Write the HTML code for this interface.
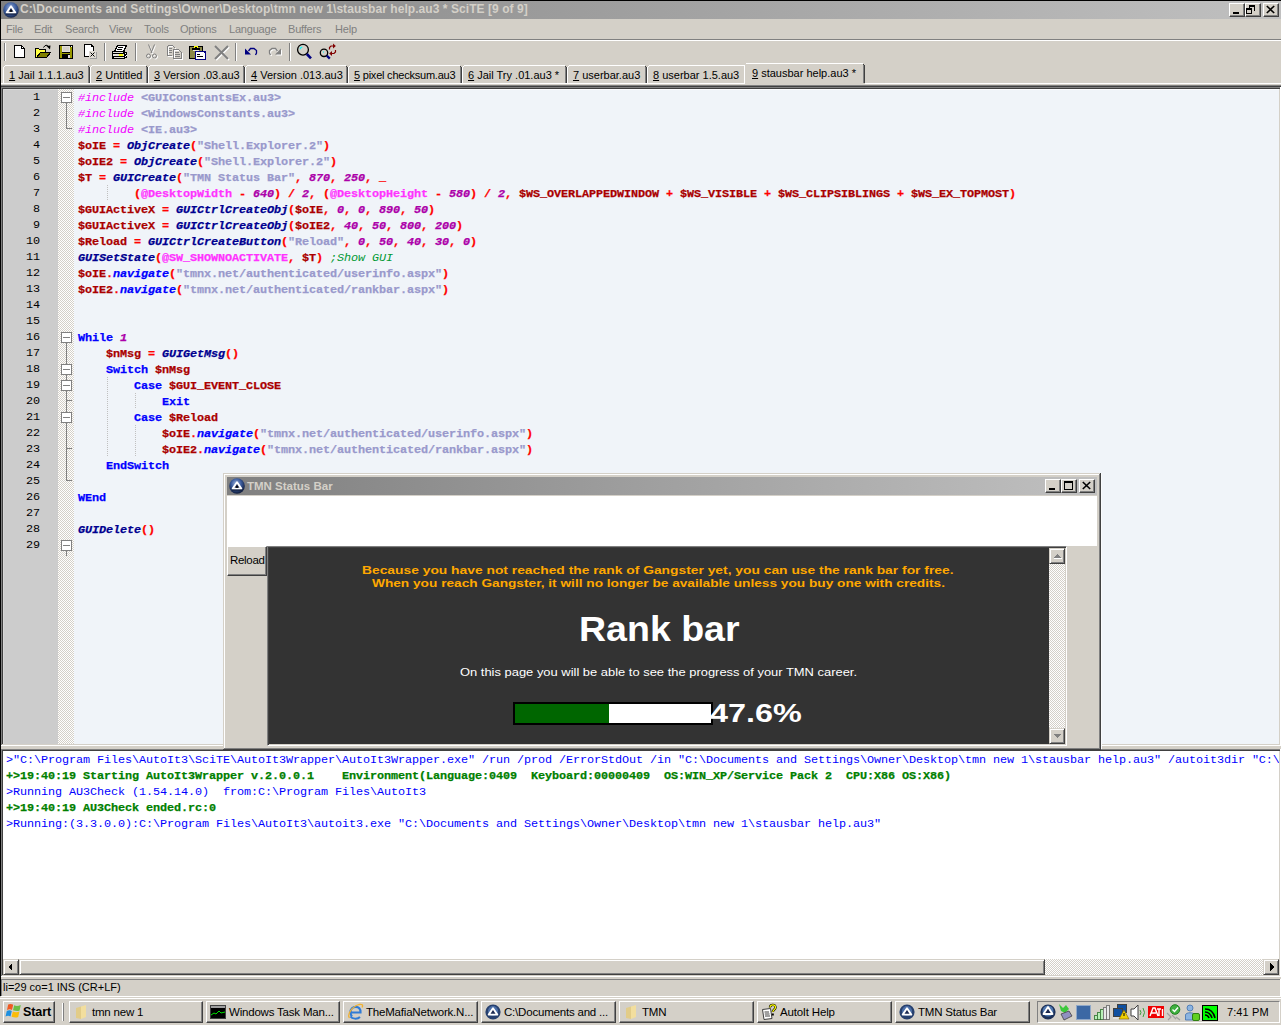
<!DOCTYPE html>
<html><head><meta charset="utf-8"><title>SciTE</title>
<style>
*{margin:0;padding:0;box-sizing:border-box}
html,body{width:1281px;height:1025px;overflow:hidden;background:#D4D0C8}
body{position:relative;font-family:"Liberation Sans",sans-serif;font-size:11px;color:#000}
.a{position:absolute}
.ui{font-family:"Liberation Sans",sans-serif;font-size:11px;white-space:pre;line-height:13px;letter-spacing:-0.2px}
.tabt{letter-spacing:0}
.tabt u{text-decoration:underline;text-underline-offset:1px}
/* title */
#title{left:1px;top:1px;width:1280px;height:18px;background:linear-gradient(to right,#808080,#C0C0C0)}
#ttext{left:20px;top:3px;color:#D4D0C8;font-weight:bold;font-size:12px;white-space:pre;line-height:13px;letter-spacing:0.06px}
.cbtn{position:absolute;width:16px;height:14px;background:#D4D0C8;border-top:1px solid #fff;border-left:1px solid #fff;border-right:1px solid #404040;border-bottom:1px solid #404040;box-shadow:inset -1px -1px 0 #808080}
.sbtn{position:absolute;width:16px;height:16px;background:#D4D0C8;border-top:1px solid #D4D0C8;border-left:1px solid #D4D0C8;border-right:1px solid #404040;border-bottom:1px solid #404040;box-shadow:inset 1px 1px 0 #fff,inset -1px -1px 0 #808080}
.iet{font-size:11px;line-height:13px;white-space:pre;transform-origin:0 0}
.tbtn{position:absolute;top:1001px;height:22px;background:#D4D0C8;border-top:1px solid #fff;border-left:1px solid #fff;border-right:1px solid #404040;border-bottom:1px solid #404040;box-shadow:inset -1px -1px 0 #808080}
/* menu */
.menu{top:23px;color:#808080}
/* editor */
#lnm{left:3px;top:89px;width:55px;height:655px;background:#CCCCCC;overflow:hidden}
#fold{left:58px;top:89px;width:16px;height:655px;background-color:#fff;background-image:linear-gradient(45deg,#D4D0C8 25%,transparent 25%,transparent 75%,#D4D0C8 75%),linear-gradient(45deg,#D4D0C8 25%,transparent 25%,transparent 75%,#D4D0C8 75%);background-size:2px 2px;background-position:0 0,1px 1px}
#txt{left:74px;top:89px;width:1205px;height:655px;background:#F0F4F9;overflow:hidden}
.cl,.ln{position:absolute;font-family:"Liberation Mono",monospace;font-size:11.8px;letter-spacing:-0.08px;line-height:16px;height:16px;white-space:pre}
.cl{left:4px;margin-top:1px}
.ln{right:18px;text-align:right;color:#000}
.cl i{font-style:normal}
.v,.o,.f,.k,.m,.n,.s,.com,.og{-webkit-text-stroke:0.25px currentColor}
.p{color:#F000FF;font-style:italic!important}
.s{color:#9999CC;font-weight:bold}
.v{color:#AA0000;font-weight:bold}
.o{color:#FF0000;font-weight:bold}
.f{color:#000090;font-weight:bold;font-style:italic!important}
.k{color:#0000FF;font-weight:bold}
.m{color:#FF33FF;font-weight:bold}
.n{color:#AC00A9;font-weight:bold;font-style:italic!important}
.c{color:#009933;font-style:italic!important}
.com{color:#0000FF;font-weight:bold;font-style:italic!important}
/* output */
#out{left:3px;top:751px;width:1276px;height:208px;background:#fff;overflow:hidden}
.ol{position:absolute;left:3px;margin-top:1px;font-family:"Liberation Mono",monospace;font-size:11.8px;letter-spacing:-0.08px;line-height:16px;white-space:pre;color:#0000FF}
.og{color:#007F00;font-weight:bold}
</style></head><body>
<!-- outer black frame -->
<div class="a" style="left:0;top:0;width:1281px;height:1px;background:#000"></div>
<div class="a" style="left:0;top:0;width:1px;height:996px;background:#000"></div>

<!-- title bar -->
<div class="a" id="title"></div>
<div class="a" id="ttext">C:\Documents and Settings\Owner\Desktop\tmn new 1\stausbar help.au3 * SciTE [9 of 9]</div>
<div class="cbtn" style="left:1229px;top:3px"></div>
<div class="cbtn" style="left:1245px;top:3px"></div>
<div class="cbtn" style="left:1263px;top:3px"></div>

<!-- menu -->
<div class="a ui menu" style="left:6px">File</div>
<div class="a ui menu" style="left:34px">Edit</div>
<div class="a ui menu" style="left:65px">Search</div>
<div class="a ui menu" style="left:109px">View</div>
<div class="a ui menu" style="left:144px">Tools</div>
<div class="a ui menu" style="left:180px">Options</div>
<div class="a ui menu" style="left:229px">Language</div>
<div class="a ui menu" style="left:288px">Buffers</div>
<div class="a ui menu" style="left:335px">Help</div>
<div class="a" style="left:1px;top:39px;width:1280px;height:1px;background:#808080"></div>
<div class="a" style="left:1px;top:40px;width:1280px;height:1px;background:#fff"></div>

<!-- toolbar placeholder -->
<svg class="a" style="left:0;top:41px" width="350" height="22" viewBox="0 41 350 22">
<g shape-rendering="crispEdges">
<rect x="4" y="43" width="1" height="18" fill="#808080"/><rect x="5" y="43" width="1" height="18" fill="#fff"/>
<rect x="104" y="43" width="1" height="18" fill="#808080"/><rect x="105" y="43" width="1" height="18" fill="#fff"/>
<rect x="135" y="43" width="1" height="18" fill="#808080"/><rect x="136" y="43" width="1" height="18" fill="#fff"/>
<rect x="235" y="43" width="1" height="18" fill="#808080"/><rect x="236" y="43" width="1" height="18" fill="#fff"/>
<rect x="289" y="43" width="1" height="18" fill="#808080"/><rect x="290" y="43" width="1" height="18" fill="#fff"/>
</g>
<!-- new -->
<g shape-rendering="crispEdges">
<path d="M14.5 45.5H21.5L24.5 48.5V57.5H14.5Z" fill="#fff" stroke="#000"/>
<path d="M21.5 45.5V48.5H24.5" fill="none" stroke="#000"/>
</g>
<!-- open -->
<g shape-rendering="crispEdges">
<path d="M35.5 57.5V48.5H38.5L39.5 49.5H45.5V52" fill="#FFFF40" stroke="#000"/>
<rect x="36" y="50" width="9" height="7" fill="#FFFF40"/>
<path d="M36.5 57.5L40.5 52.5H50.5L46.5 57.5Z" fill="#808000" stroke="#000"/>
<rect x="36" y="57" width="11" height="1" fill="#000"/>
</g>
<path d="M43.5 47.5Q46 43.5 48.5 46.5" stroke="#000" fill="none"/>
<path d="M46.5 46L50.5 45.5L50 49.5Z" fill="#000"/>
<!-- save -->
<g shape-rendering="crispEdges">
<rect x="59" y="45" width="14" height="14" fill="#000"/>
<rect x="60" y="46" width="2" height="12" fill="#999900"/>
<rect x="70" y="47" width="2" height="11" fill="#999900"/>
<rect x="62" y="46" width="8" height="6" fill="#E4E0D8"/>
<rect x="63" y="47" width="6" height="4" fill="#D4D0C8"/>
<rect x="60" y="53" width="12" height="1" fill="#999900"/>
<rect x="68" y="55" width="2" height="3" fill="#E4E0D8"/>
<rect x="71" y="46" width="1" height="1" fill="#fff"/>
</g>
<!-- close doc -->
<g shape-rendering="crispEdges">
<rect x="85" y="45" width="8" height="11" fill="#fff"/>
<path d="M84.5 56.5V44.5H91.5L93.5 46.5V50.5" fill="none" stroke="#000"/>
<path d="M84.5 56.5H88.5" stroke="#000"/>
<path d="M91.5 44.5V46.5H93.5" fill="none" stroke="#000"/>
<rect x="89" y="51" width="7" height="7" fill="#E0DCD4"/>
<rect x="90" y="58" width="7" height="1" fill="#A0A0A0"/><rect x="96" y="52" width="1" height="7" fill="#A0A0A0"/>
</g>
<path d="M90.5 52.5L94.5 56.5M94.5 52.5L90.5 56.5" stroke="#000" stroke-width="1"/>
<!-- print -->
<g shape-rendering="crispEdges">
<path d="M117.5 45.5H126.5L123.5 51.5H114.5Z" fill="#fff" stroke="#000"/>
<rect x="118" y="47" width="5" height="1" fill="#000"/><rect x="117" y="49" width="5" height="1" fill="#000"/>
<rect x="112" y="51" width="13" height="8" fill="#000"/>
<rect x="113" y="52" width="10" height="1" fill="#E8E4DC"/>
<rect x="113" y="54" width="11" height="2" fill="#E8E4DC"/>
<rect x="119" y="54" width="4" height="2" fill="#FFFF00"/>
<rect x="114" y="57" width="10" height="1" fill="#E8E4DC"/>
<rect x="125" y="52" width="2" height="6" fill="#000"/>
<rect x="125" y="53" width="1" height="1" fill="#fff"/><rect x="126" y="55" width="1" height="1" fill="#fff"/><rect x="125" y="56" width="1" height="1" fill="#fff"/>
</g>
<!-- cut disabled -->
<g fill="none" stroke-width="1">
<g stroke="#fff" transform="translate(1,1)"><path d="M148.5 44.5L152 53M154.5 44.5L151 53"/><circle cx="148.5" cy="56" r="2"/><circle cx="154.5" cy="56" r="2"/></g>
<g stroke="#808080"><path d="M148.5 44.5L152 53M154.5 44.5L151 53"/><circle cx="148.5" cy="56" r="2"/><circle cx="154.5" cy="56" r="2"/></g>
</g>
<!-- copy disabled -->
<g shape-rendering="crispEdges" fill="none">
<g stroke="#fff" transform="translate(1,1)"><path d="M167.5 45.5H172.5L174.5 47.5V48M167.5 45.5V55.5H172"/><path d="M173.5 49.5H178.5L181.5 52.5V58.5H173.5Z"/></g>
<g stroke="#808080"><path d="M167.5 45.5H172.5L174.5 47.5V48M167.5 45.5V55.5H172"/><path d="M173.5 49.5H178.5L181.5 52.5V58.5H173.5Z"/><path d="M169 48.5H172M169 50.5H172M169 52.5H172M175 52.5H179M175 54.5H180M175 56.5H180"/></g>
</g>
<!-- paste -->
<g shape-rendering="crispEdges">
<rect x="189" y="46" width="14" height="13" rx="1" fill="#000"/>
<rect x="190" y="47" width="12" height="11" fill="#8A8848"/>
<rect x="192" y="48" width="8" height="2" fill="#000"/>
<rect x="193" y="50" width="6" height="1" fill="#E8E4D8"/>
<rect x="194" y="46" width="4" height="2" fill="#FFFF00"/>
<rect x="195" y="47" width="2" height="1" fill="#000"/>
<rect x="195" y="51" width="11" height="9" fill="#000080"/>
<rect x="196" y="52" width="8" height="7" fill="#fff"/>
<rect x="204" y="53" width="1" height="6" fill="#fff"/>
<rect x="197" y="54" width="3" height="1" fill="#000"/><rect x="197" y="56" width="6" height="1" fill="#000"/>
</g>
<!-- delete disabled -->
<g stroke-width="2">
<path d="M215 46L228 59M228 46L215 59" stroke="#fff" transform="translate(1,1)"/>
<path d="M215 46L228 59M228 46L215 59" stroke="#808080"/>
</g>
<!-- undo -->
<path d="M248.5 51L250.5 48.5H254L256.5 50.5V53L255.5 55" stroke="#000080" stroke-width="1.3" fill="none"/>
<path d="M245 48.5V54.5H251Z" fill="#000080"/>
<!-- redo disabled -->
<g transform="translate(1,1)"><path d="M277.5 51L275.5 48.5H272L269.5 50.5V53L270.5 55" stroke="#fff" stroke-width="1.3" fill="none"/><path d="M281 48.5V54.5H275Z" fill="#fff"/></g>
<path d="M277.5 51L275.5 48.5H272L269.5 50.5V53L270.5 55" stroke="#808080" stroke-width="1.3" fill="none"/>
<path d="M281 48.5V54.5H275Z" fill="#808080"/>
<!-- find -->
<circle cx="303" cy="49.7" r="5.4" stroke="#000" stroke-width="1.3" fill="none"/>
<path d="M300.3 49.3V48.3L301.3 47.3H302.3" stroke="#00FFFF" stroke-width="1.1" fill="none"/>
<path d="M306.8 54L311 58.3" stroke="#000080" stroke-width="2.6"/>
<!-- replace -->
<circle cx="324" cy="52.8" r="3.7" stroke="#000" stroke-width="1.3" fill="none"/>
<rect x="323" y="51.5" width="1" height="1" fill="#00FFFF"/>
<path d="M326.8 55.6L329.8 58.6" stroke="#000080" stroke-width="2.2"/>
<path d="M329.5 49.5V47.5L331 46H333.5" stroke="#800000" stroke-width="1.2" fill="none"/>
<path d="M333 43.5L335.8 46L333 48.5Z" fill="#800000"/>
<path d="M335.5 50V52L334 53.5H331.5" stroke="#800000" stroke-width="1.2" fill="none"/>
<path d="M332 51L329.2 53.5L332 56Z" fill="#800000"/>
</svg>


<!-- tabs -->
<div class="a" style="left:5px;top:65px;width:83px;height:1px;background:#fff"></div>
<div class="a" style="left:4px;top:66px;width:1px;height:1px;background:#fff"></div>
<div class="a" style="left:3px;top:67px;width:1px;height:16px;background:#fff"></div>
<div class="a" style="left:88px;top:67px;width:1px;height:16px;background:#808080"></div>
<div class="a" style="left:89px;top:67px;width:1px;height:16px;background:#404040"></div>
<div class="a" style="left:88px;top:66px;width:1px;height:1px;background:#404040"></div>
<div class="a ui tabt" style="left:9px;top:69px"><u>1</u> Jail 1.1.1.au3</div>
<div class="a" style="left:92px;top:65px;width:54px;height:1px;background:#fff"></div>
<div class="a" style="left:91px;top:66px;width:1px;height:1px;background:#fff"></div>
<div class="a" style="left:90px;top:67px;width:1px;height:16px;background:#fff"></div>
<div class="a" style="left:146px;top:67px;width:1px;height:16px;background:#808080"></div>
<div class="a" style="left:147px;top:67px;width:1px;height:16px;background:#404040"></div>
<div class="a" style="left:146px;top:66px;width:1px;height:1px;background:#404040"></div>
<div class="a ui tabt" style="left:96px;top:69px"><u>2</u> Untitled</div>
<div class="a" style="left:150px;top:65px;width:93px;height:1px;background:#fff"></div>
<div class="a" style="left:149px;top:66px;width:1px;height:1px;background:#fff"></div>
<div class="a" style="left:148px;top:67px;width:1px;height:16px;background:#fff"></div>
<div class="a" style="left:243px;top:67px;width:1px;height:16px;background:#808080"></div>
<div class="a" style="left:244px;top:67px;width:1px;height:16px;background:#404040"></div>
<div class="a" style="left:243px;top:66px;width:1px;height:1px;background:#404040"></div>
<div class="a ui tabt" style="left:154px;top:69px"><u>3</u> Version .03.au3</div>
<div class="a" style="left:247px;top:65px;width:99px;height:1px;background:#fff"></div>
<div class="a" style="left:246px;top:66px;width:1px;height:1px;background:#fff"></div>
<div class="a" style="left:245px;top:67px;width:1px;height:16px;background:#fff"></div>
<div class="a" style="left:346px;top:67px;width:1px;height:16px;background:#808080"></div>
<div class="a" style="left:347px;top:67px;width:1px;height:16px;background:#404040"></div>
<div class="a" style="left:346px;top:66px;width:1px;height:1px;background:#404040"></div>
<div class="a ui tabt" style="left:251px;top:69px"><u>4</u> Version .013.au3</div>
<div class="a" style="left:350px;top:65px;width:110px;height:1px;background:#fff"></div>
<div class="a" style="left:349px;top:66px;width:1px;height:1px;background:#fff"></div>
<div class="a" style="left:348px;top:67px;width:1px;height:16px;background:#fff"></div>
<div class="a" style="left:460px;top:67px;width:1px;height:16px;background:#808080"></div>
<div class="a" style="left:461px;top:67px;width:1px;height:16px;background:#404040"></div>
<div class="a" style="left:460px;top:66px;width:1px;height:1px;background:#404040"></div>
<div class="a ui tabt" style="left:354px;top:69px;letter-spacing:-0.22px"><u>5</u> pixel checksum.au3</div>
<div class="a" style="left:464px;top:65px;width:101px;height:1px;background:#fff"></div>
<div class="a" style="left:463px;top:66px;width:1px;height:1px;background:#fff"></div>
<div class="a" style="left:462px;top:67px;width:1px;height:16px;background:#fff"></div>
<div class="a" style="left:565px;top:67px;width:1px;height:16px;background:#808080"></div>
<div class="a" style="left:566px;top:67px;width:1px;height:16px;background:#404040"></div>
<div class="a" style="left:565px;top:66px;width:1px;height:1px;background:#404040"></div>
<div class="a ui tabt" style="left:468px;top:69px"><u>6</u> Jail Try .01.au3 *</div>
<div class="a" style="left:569px;top:65px;width:76px;height:1px;background:#fff"></div>
<div class="a" style="left:568px;top:66px;width:1px;height:1px;background:#fff"></div>
<div class="a" style="left:567px;top:67px;width:1px;height:16px;background:#fff"></div>
<div class="a" style="left:645px;top:67px;width:1px;height:16px;background:#808080"></div>
<div class="a" style="left:646px;top:67px;width:1px;height:16px;background:#404040"></div>
<div class="a" style="left:645px;top:66px;width:1px;height:1px;background:#404040"></div>
<div class="a ui tabt" style="left:573px;top:69px"><u>7</u> userbar.au3</div>
<div class="a" style="left:649px;top:65px;width:95px;height:1px;background:#fff"></div>
<div class="a" style="left:648px;top:66px;width:1px;height:1px;background:#fff"></div>
<div class="a" style="left:647px;top:67px;width:1px;height:16px;background:#fff"></div>
<div class="a ui tabt" style="left:653px;top:69px"><u>8</u> userbar 1.5.au3</div>
<div class="a" style="left:1px;top:83px;width:744px;height:1px;background:#fff"></div>
<div class="a" style="left:865px;top:83px;width:416px;height:1px;background:#fff"></div>
<div class="a" style="left:746px;top:63px;width:117px;height:1px;background:#fff"></div>
<div class="a" style="left:745px;top:64px;width:1px;height:1px;background:#fff"></div>
<div class="a" style="left:744px;top:65px;width:1px;height:19px;background:#fff"></div>
<div class="a" style="left:745px;top:64px;width:118px;height:20px;background:#D4D0C8"></div>
<div class="a" style="left:746px;top:63px;width:117px;height:1px;background:#fff"></div>
<div class="a" style="left:744px;top:65px;width:1px;height:18px;background:#fff"></div>
<div class="a" style="left:863px;top:65px;width:1px;height:18px;background:#808080"></div>
<div class="a" style="left:864px;top:65px;width:1px;height:18px;background:#404040"></div>
<div class="a" style="left:863px;top:64px;width:1px;height:1px;background:#404040"></div>
<div class="a ui tabt" style="left:752px;top:67px"><u>9</u> stausbar help.au3 *</div>

<div class="a" style="left:1px;top:85px;width:1280px;height:1px;background:#808080"></div>
<div class="a" style="left:1px;top:86px;width:1280px;height:1px;background:#404040"></div>

<!-- editor frame -->
<div class="a" style="left:1px;top:87px;width:1280px;height:1px;background:#808080"></div>
<div class="a" style="left:1px;top:88px;width:1280px;height:1px;background:#404040"></div>
<div class="a" style="left:1px;top:87px;width:1px;height:659px;background:#808080"></div>
<div class="a" style="left:2px;top:88px;width:1px;height:656px;background:#404040"></div>
<div class="a" style="left:3px;top:744px;width:1277px;height:1px;background:#D4D0C8"></div>
<div class="a" style="left:1px;top:745px;width:1280px;height:1px;background:#fff"></div>
<div class="a" style="left:1280px;top:87px;width:1px;height:659px;background:#fff"></div>

<div class="a" id="lnm"><div class="ln" style="top:0px">1</div>
<div class="ln" style="top:16px">2</div>
<div class="ln" style="top:32px">3</div>
<div class="ln" style="top:48px">4</div>
<div class="ln" style="top:64px">5</div>
<div class="ln" style="top:80px">6</div>
<div class="ln" style="top:96px">7</div>
<div class="ln" style="top:112px">8</div>
<div class="ln" style="top:128px">9</div>
<div class="ln" style="top:144px">10</div>
<div class="ln" style="top:160px">11</div>
<div class="ln" style="top:176px">12</div>
<div class="ln" style="top:192px">13</div>
<div class="ln" style="top:208px">14</div>
<div class="ln" style="top:224px">15</div>
<div class="ln" style="top:240px">16</div>
<div class="ln" style="top:256px">17</div>
<div class="ln" style="top:272px">18</div>
<div class="ln" style="top:288px">19</div>
<div class="ln" style="top:304px">20</div>
<div class="ln" style="top:320px">21</div>
<div class="ln" style="top:336px">22</div>
<div class="ln" style="top:352px">23</div>
<div class="ln" style="top:368px">24</div>
<div class="ln" style="top:384px">25</div>
<div class="ln" style="top:400px">26</div>
<div class="ln" style="top:416px">27</div>
<div class="ln" style="top:432px">28</div>
<div class="ln" style="top:448px">29</div></div>
<div class="a" id="fold"></div>
<div class="a" id="txt"><div class="cl" style="top:0px"><i class="p">#include</i> <i class="s">&lt;GUIConstantsEx.au3&gt;</i></div>
<div class="cl" style="top:16px"><i class="p">#include</i> <i class="s">&lt;WindowsConstants.au3&gt;</i></div>
<div class="cl" style="top:32px"><i class="p">#include</i> <i class="s">&lt;IE.au3&gt;</i></div>
<div class="cl" style="top:48px"><i class="v">$oIE</i> <i class="o">=</i> <i class="f">ObjCreate</i><i class="o">(</i><i class="s">&quot;Shell.Explorer.2&quot;</i><i class="o">)</i></div>
<div class="cl" style="top:64px"><i class="v">$oIE2</i> <i class="o">=</i> <i class="f">ObjCreate</i><i class="o">(</i><i class="s">&quot;Shell.Explorer.2&quot;</i><i class="o">)</i></div>
<div class="cl" style="top:80px"><i class="v">$T</i> <i class="o">=</i> <i class="f">GUICreate</i><i class="o">(</i><i class="s">&quot;TMN Status Bar&quot;</i><i class="o">,</i> <i class="n">870</i><i class="o">,</i> <i class="n">250</i><i class="o">,</i> <i class="o">_</i></div>
<div class="cl" style="top:96px">        <i class="o">(</i><i class="m">@DesktopWidth</i> <i class="o">-</i> <i class="n">640</i><i class="o">)</i> <i class="o">/</i> <i class="n">2</i><i class="o">,</i> <i class="o">(</i><i class="m">@DesktopHeight</i> <i class="o">-</i> <i class="n">580</i><i class="o">)</i> <i class="o">/</i> <i class="n">2</i><i class="o">,</i> <i class="v">$WS_OVERLAPPEDWINDOW</i> <i class="o">+</i> <i class="v">$WS_VISIBLE</i> <i class="o">+</i> <i class="v">$WS_CLIPSIBLINGS</i> <i class="o">+</i> <i class="v">$WS_EX_TOPMOST</i><i class="o">)</i></div>
<div class="cl" style="top:112px"><i class="v">$GUIActiveX</i> <i class="o">=</i> <i class="f">GUICtrlCreateObj</i><i class="o">(</i><i class="v">$oIE</i><i class="o">,</i> <i class="n">0</i><i class="o">,</i> <i class="n">0</i><i class="o">,</i> <i class="n">890</i><i class="o">,</i> <i class="n">50</i><i class="o">)</i></div>
<div class="cl" style="top:128px"><i class="v">$GUIActiveX</i> <i class="o">=</i> <i class="f">GUICtrlCreateObj</i><i class="o">(</i><i class="v">$oIE2</i><i class="o">,</i> <i class="n">40</i><i class="o">,</i> <i class="n">50</i><i class="o">,</i> <i class="n">800</i><i class="o">,</i> <i class="n">200</i><i class="o">)</i></div>
<div class="cl" style="top:144px"><i class="v">$Reload</i> <i class="o">=</i> <i class="f">GUICtrlCreateButton</i><i class="o">(</i><i class="s">&quot;Reload&quot;</i><i class="o">,</i> <i class="n">0</i><i class="o">,</i> <i class="n">50</i><i class="o">,</i> <i class="n">40</i><i class="o">,</i> <i class="n">30</i><i class="o">,</i> <i class="n">0</i><i class="o">)</i></div>
<div class="cl" style="top:160px"><i class="f">GUISetState</i><i class="o">(</i><i class="m">@SW_SHOWNOACTIVATE</i><i class="o">,</i> <i class="v">$T</i><i class="o">)</i> <i class="c">;Show GUI</i></div>
<div class="cl" style="top:176px"><i class="v">$oIE</i><i class="o">.</i><i class="com">navigate</i><i class="o">(</i><i class="s">&quot;tmnx.net/authenticated/userinfo.aspx&quot;</i><i class="o">)</i></div>
<div class="cl" style="top:192px"><i class="v">$oIE2</i><i class="o">.</i><i class="com">navigate</i><i class="o">(</i><i class="s">&quot;tmnx.net/authenticated/rankbar.aspx&quot;</i><i class="o">)</i></div>
<div class="cl" style="top:208px"></div>
<div class="cl" style="top:224px"></div>
<div class="cl" style="top:240px"><i class="k">While</i> <i class="n">1</i></div>
<div class="cl" style="top:256px">    <i class="v">$nMsg</i> <i class="o">=</i> <i class="f">GUIGetMsg</i><i class="o">()</i></div>
<div class="cl" style="top:272px">    <i class="k">Switch</i> <i class="v">$nMsg</i></div>
<div class="cl" style="top:288px">        <i class="k">Case</i> <i class="v">$GUI_EVENT_CLOSE</i></div>
<div class="cl" style="top:304px">            <i class="k">Exit</i></div>
<div class="cl" style="top:320px">        <i class="k">Case</i> <i class="v">$Reload</i></div>
<div class="cl" style="top:336px">            <i class="v">$oIE</i><i class="o">.</i><i class="com">navigate</i><i class="o">(</i><i class="s">&quot;tmnx.net/authenticated/userinfo.aspx&quot;</i><i class="o">)</i></div>
<div class="cl" style="top:352px">            <i class="v">$oIE2</i><i class="o">.</i><i class="com">navigate</i><i class="o">(</i><i class="s">&quot;tmnx.net/authenticated/rankbar.aspx&quot;</i><i class="o">)</i></div>
<div class="cl" style="top:368px">    <i class="k">EndSwitch</i></div>
<div class="cl" style="top:384px"></div>
<div class="cl" style="top:400px"><i class="k">WEnd</i></div>
<div class="cl" style="top:416px"></div>
<div class="cl" style="top:432px"><i class="f">GUIDelete</i><i class="o">()</i></div>
<div class="cl" style="top:448px"></div></div>
<div class="a" style="left:74px;top:89px;width:1205px;height:1px;background:#FBFCFE"></div>
<div class="a" style="left:3px;top:89px;width:55px;height:1px;background:#DADADA"></div>
<div class="a" style="left:3px;top:89px;width:1px;height:655px;background:#D8D8D8"></div>
<div class="a" style="left:107px;top:185px;width:1px;height:16px;background:repeating-linear-gradient(to bottom,#C0C0C0 0,#C0C0C0 1px,transparent 1px,transparent 2px)"></div>
<div class="a" style="left:107px;top:377px;width:1px;height:16px;background:repeating-linear-gradient(to bottom,#C0C0C0 0,#C0C0C0 1px,transparent 1px,transparent 2px)"></div>
<div class="a" style="left:107px;top:393px;width:1px;height:16px;background:repeating-linear-gradient(to bottom,#C0C0C0 0,#C0C0C0 1px,transparent 1px,transparent 2px)"></div>
<div class="a" style="left:107px;top:409px;width:1px;height:16px;background:repeating-linear-gradient(to bottom,#C0C0C0 0,#C0C0C0 1px,transparent 1px,transparent 2px)"></div>
<div class="a" style="left:107px;top:425px;width:1px;height:16px;background:repeating-linear-gradient(to bottom,#C0C0C0 0,#C0C0C0 1px,transparent 1px,transparent 2px)"></div>
<div class="a" style="left:107px;top:441px;width:1px;height:16px;background:repeating-linear-gradient(to bottom,#C0C0C0 0,#C0C0C0 1px,transparent 1px,transparent 2px)"></div>
<div class="a" style="left:135px;top:393px;width:1px;height:16px;background:repeating-linear-gradient(to bottom,#C0C0C0 0,#C0C0C0 1px,transparent 1px,transparent 2px)"></div>
<div class="a" style="left:135px;top:425px;width:1px;height:16px;background:repeating-linear-gradient(to bottom,#C0C0C0 0,#C0C0C0 1px,transparent 1px,transparent 2px)"></div>
<div class="a" style="left:135px;top:441px;width:1px;height:16px;background:repeating-linear-gradient(to bottom,#C0C0C0 0,#C0C0C0 1px,transparent 1px,transparent 2px)"></div>
<div class="a" style="left:61px;top:92px;width:11px;height:11px;border:1px solid #808080;background:#fff"></div>
<div class="a" style="left:63px;top:97px;width:7px;height:1px;background:#808080"></div>
<div class="a" style="left:66px;top:102px;width:1px;height:27px;background:#808080"></div>
<div class="a" style="left:66px;top:128px;width:6px;height:1px;background:#808080"></div>
<div class="a" style="left:61px;top:332px;width:11px;height:11px;border:1px solid #808080;background:#fff"></div>
<div class="a" style="left:63px;top:337px;width:7px;height:1px;background:#808080"></div>
<div class="a" style="left:61px;top:364px;width:11px;height:11px;border:1px solid #808080;background:#fff"></div>
<div class="a" style="left:63px;top:369px;width:7px;height:1px;background:#808080"></div>
<div class="a" style="left:61px;top:380px;width:11px;height:11px;border:1px solid #808080;background:#fff"></div>
<div class="a" style="left:63px;top:385px;width:7px;height:1px;background:#808080"></div>
<div class="a" style="left:61px;top:412px;width:11px;height:11px;border:1px solid #808080;background:#fff"></div>
<div class="a" style="left:63px;top:417px;width:7px;height:1px;background:#808080"></div>
<div class="a" style="left:66px;top:343px;width:1px;height:21px;background:#808080"></div>
<div class="a" style="left:66px;top:375px;width:1px;height:5px;background:#808080"></div>
<div class="a" style="left:66px;top:391px;width:1px;height:21px;background:#808080"></div>
<div class="a" style="left:66px;top:423px;width:1px;height:58px;background:#808080"></div>
<div class="a" style="left:66px;top:400px;width:6px;height:1px;background:#808080"></div>
<div class="a" style="left:66px;top:448px;width:6px;height:1px;background:#808080"></div>
<div class="a" style="left:66px;top:480px;width:6px;height:1px;background:#808080"></div>
<div class="a" style="left:61px;top:540px;width:11px;height:11px;border:1px solid #808080;background:#fff"></div>
<div class="a" style="left:63px;top:545px;width:7px;height:1px;background:#808080"></div>
<div class="a" style="left:66px;top:551px;width:1px;height:5px;background:#808080"></div>

<!-- output frame -->
<div class="a" style="left:1px;top:749px;width:1280px;height:1px;background:#808080"></div>
<div class="a" style="left:1px;top:750px;width:1280px;height:1px;background:#404040"></div>
<div class="a" style="left:1px;top:749px;width:1px;height:227px;background:#808080"></div>
<div class="a" style="left:2px;top:750px;width:1px;height:225px;background:#404040"></div>
<div class="a" style="left:1px;top:976px;width:1280px;height:1px;background:#fff"></div>
<div class="a" style="left:1280px;top:749px;width:1px;height:228px;background:#fff"></div>

<div class="a" id="out">
<div class="ol" style="top:0">&gt;"C:\Program Files\AutoIt3\SciTE\AutoIt3Wrapper\AutoIt3Wrapper.exe" /run /prod /ErrorStdOut /in "C:\Documents and Settings\Owner\Desktop\tmn new 1\stausbar help.au3" /autoit3dir "C:\Program Files\AutoIt3" /UserParams</div>
<div class="ol og" style="top:16px">+&gt;19:40:19 Starting AutoIt3Wrapper v.2.0.0.1    Environment(Language:0409  Keyboard:00000409  OS:WIN_XP/Service Pack 2  CPU:X86 OS:X86)</div>
<div class="ol" style="top:32px">&gt;Running AU3Check (1.54.14.0)  from:C:\Program Files\AutoIt3</div>
<div class="ol og" style="top:48px">+&gt;19:40:19 AU3Check ended.rc:0</div>
<div class="ol" style="top:64px">&gt;Running:(3.3.0.0):C:\Program Files\AutoIt3\autoit3.exe "C:\Documents and Settings\Owner\Desktop\tmn new 1\stausbar help.au3"</div>
</div>

<!-- ===== hscroll ===== -->
<div class="a" style="left:3px;top:959px;width:1276px;height:16px;background-color:#fff;background-image:linear-gradient(45deg,#D4D0C8 25%,transparent 25%,transparent 75%,#D4D0C8 75%),linear-gradient(45deg,#D4D0C8 25%,transparent 25%,transparent 75%,#D4D0C8 75%);background-size:2px 2px;background-position:0 0,1px 1px"></div>
<div class="sbtn" style="left:3px;top:959px"></div>
<div class="sbtn" style="left:19px;top:959px;width:1026px"></div>
<div class="sbtn" style="left:1263px;top:959px"></div>
<svg class="a" style="left:3px;top:959px" width="16" height="16" shape-rendering="crispEdges"><path d="M5 8L9 4V12Z" fill="#000"/></svg>
<svg class="a" style="left:1263px;top:959px" width="16" height="16" shape-rendering="crispEdges"><path d="M11 8L7 4V12Z" fill="#000"/></svg>
<div class="a" style="left:3px;top:975px;width:1277px;height:1px;background:#D4D0C8"></div>

<!-- ===== status bar ===== -->
<div class="a" style="left:1px;top:979px;width:1279px;height:1px;background:#808080"></div>
<div class="a" style="left:1px;top:979px;width:1px;height:17px;background:#808080"></div>
<div class="a" style="left:1px;top:996px;width:1280px;height:1px;background:#fff"></div>
<div class="a" style="left:1280px;top:979px;width:1px;height:18px;background:#fff"></div>
<div class="a ui" style="left:3px;top:981px;letter-spacing:0px;font-size:11px">li=29 co=1 INS (CR+LF)</div>

<!-- ===== taskbar ===== -->
<div class="a" style="left:0;top:997px;width:1281px;height:28px;background:#D4D0C8"></div>
<div class="a" style="left:0;top:998px;width:1281px;height:1px;background:#fff"></div>
<div class="tbtn" style="left:3px;width:52px"></div>
<svg class="a" style="left:5px;top:1003px" width="17" height="17" viewBox="0 0 17 17">
<path d="M3.2 1.5C5 0.5 7 1 8.2 1.8L7 7C5.5 6 3.8 6 2 7Z" fill="#F05A22"/>
<path d="M9.2 2.2C11 3.2 13 3.2 15.8 2L14.6 7.5C12.5 8.5 10.5 8 8 7.2Z" fill="#6CBE45"/>
<path d="M1.8 8C3.6 7 5.5 7 6.8 8L5.5 13.5C4 12.5 2.2 12.5 0.5 13.5Z" fill="#1E90E0"/>
<path d="M7.8 8.4C10 9.4 12 9.4 14.4 8.5L13.2 14C11 15 9 14.6 6.6 13.8Z" fill="#FBBC09"/>
</svg>
<div class="a" style="left:23px;top:1005px;font-weight:bold;font-size:12.5px;line-height:15px;white-space:pre;letter-spacing:-0.1px">Start</div>
<div class="a" style="left:62px;top:1003px;width:1px;height:18px;background:#fff"></div>
<div class="a" style="left:63px;top:1003px;width:1px;height:18px;background:#808080"></div>
<div class="tbtn" style="left:69px;width:134px"></div>
<svg class="a" style="left:73px;top:1004px" width="16" height="16" viewBox="0 0 16 16"><path d="M3 4L8 2.5V15L3 14Z" fill="#E2CC88"/><path d="M8 2.5L13 1V13L8 15Z" fill="#F2DE9E"/></svg>
<div class="a ui" style="left:92px;top:1006px;font-size:11.5px;letter-spacing:-0.2px">tmn new 1</div>
<div class="tbtn" style="left:206px;width:134px"></div>
<svg class="a" style="left:210px;top:1004px" width="16" height="16" viewBox="0 0 16 16" shape-rendering="crispEdges"><rect x="0" y="1" width="16" height="14" fill="#404040"/><rect x="1" y="2" width="14" height="2" fill="#A0A0A0"/><rect x="1" y="4" width="14" height="10" fill="#000"/><path d="M1 11L4 9L6 10L9 7L11 9L15 8" stroke="#00E000" fill="none" shape-rendering="auto"/></svg>
<div class="a ui" style="left:229px;top:1006px;font-size:11.5px;letter-spacing:-0.2px">Windows Task Man...</div>
<div class="tbtn" style="left:343px;width:135px"></div>
<svg class="a" style="left:347px;top:1003px" width="17" height="17" viewBox="0 0 17 17"><path d="M3.5 13.5C5 16 10.5 16.5 13 14" fill="none" stroke="#2E7BD6" stroke-width="2"/><path d="M4 9.5H13.5C13.8 5.5 11.5 3.8 8.8 3.8C5.8 3.8 3.5 6.2 3.5 9.3C3.5 11.2 4 12.5 5 13.5" fill="none" stroke="#2E7BD6" stroke-width="2.2"/><path d="M2.5 15C0 12 4 4 12 1.5C15 0.8 16.5 2 15 4.5" fill="none" stroke="#F2B230" stroke-width="1.3"/></svg>
<div class="a ui" style="left:366px;top:1006px;font-size:11.5px;letter-spacing:-0.2px">TheMafiaNetwork.N...</div>
<div class="tbtn" style="left:481px;width:135px"></div>
<svg class="a" style="left:485px;top:1004px" width="16" height="16" viewBox="0 0 16 16"><circle cx="8" cy="8" r="7.6" fill="#27406E"/><circle cx="8" cy="7" r="5" fill="#4C6FA8"/><path d="M8 4.2L12.3 10.6H3.7Z" fill="#1A2850" stroke="#fff" stroke-width="1.9" stroke-linejoin="round"/></svg>
<div class="a ui" style="left:504px;top:1006px;font-size:11.5px;letter-spacing:-0.2px">C:\Documents and ...</div>
<div class="tbtn" style="left:619px;width:135px"></div>
<svg class="a" style="left:623px;top:1004px" width="16" height="16" viewBox="0 0 16 16"><path d="M3 4L8 2.5V15L3 14Z" fill="#E2CC88"/><path d="M8 2.5L13 1V13L8 15Z" fill="#F2DE9E"/></svg>
<div class="a ui" style="left:642px;top:1006px;font-size:11.5px;letter-spacing:-0.2px">TMN</div>
<div class="tbtn" style="left:757px;width:135px"></div>
<svg class="a" style="left:761px;top:1003px" width="17" height="17" viewBox="0 0 17 17"><path d="M1.5 6.5L9.5 5.5L11 15.5L3 16.5Z" fill="#fff" stroke="#404040"/><path d="M3.5 9H8M3.8 11H8.5M4 13H9" stroke="#404040"/><path d="M9 4.5C9 1 14.5 1 14.5 4.5C14.5 6.5 11.8 6.5 11.8 9" fill="none" stroke="#000" stroke-width="2.4"/><path d="M9 4.5C9 1 14.5 1 14.5 4.5C14.5 6.5 11.8 6.5 11.8 9" fill="none" stroke="#FFFF00" stroke-width="1.2"/><rect x="10.8" y="10.5" width="2" height="2" fill="#000"/></svg>
<div class="a ui" style="left:780px;top:1006px;font-size:11.5px;letter-spacing:-0.2px">AutoIt Help</div>
<div class="tbtn" style="left:895px;width:135px"></div>
<svg class="a" style="left:899px;top:1004px" width="16" height="16" viewBox="0 0 16 16"><circle cx="8" cy="8" r="7.6" fill="#27406E"/><circle cx="8" cy="7" r="5" fill="#4C6FA8"/><path d="M8 4.2L12.3 10.6H3.7Z" fill="#1A2850" stroke="#fff" stroke-width="1.9" stroke-linejoin="round"/></svg>
<div class="a ui" style="left:918px;top:1006px;font-size:11.5px;letter-spacing:-0.2px">TMN Status Bar</div>
<!-- tray -->
<div class="a" style="left:1037px;top:1001px;width:243px;height:22px;border-top:1px solid #808080;border-left:1px solid #808080;border-right:1px solid #fff;border-bottom:1px solid #fff"></div>
<svg class="a" style="left:1038px;top:1002px" width="200" height="20" viewBox="1038 1002 200 20">
<!-- autoit -->
<circle cx="1048" cy="1012" r="7.6" fill="#1C3058"/><circle cx="1048" cy="1011" r="5.5" fill="#5078B0"/>
<path d="M1048 1007L1052.5 1014H1043.5Z" fill="#1A2850" stroke="#fff" stroke-width="1.9" stroke-linejoin="round"/>
<!-- green flag keyboard -->
<path d="M1059 1004L1063 1008L1066 1005L1069 1009L1065 1013L1061 1011Z" fill="#3CC83C"/>
<path d="M1061 1014L1069 1011L1072 1016L1064 1020Z" fill="#9090C0" stroke="#404040" stroke-width="0.8"/>
<!-- blue square -->
<rect x="1076.5" y="1005.5" width="14" height="14" fill="#3C68A4" stroke="#90A8C8"/>
<!-- signal -->
<g shape-rendering="crispEdges">
<rect x="1094" y="1015" width="3" height="4" fill="#B8F0B8" stroke="#2A6A2A" stroke-width="0.8"/>
<rect x="1097" y="1012" width="3" height="7" fill="#B8F0B8" stroke="#2A6A2A" stroke-width="0.8"/>
<rect x="1100" y="1009" width="3" height="10" fill="#B8F0B8" stroke="#2A6A2A" stroke-width="0.8"/>
<rect x="1103" y="1007" width="3" height="12" fill="#E8E8E8" stroke="#606060" stroke-width="0.8"/>
<rect x="1106" y="1005" width="3" height="14" fill="#E8E8E8" stroke="#606060" stroke-width="0.8"/>
</g>
<!-- network -->
<rect x="1117.5" y="1004.5" width="9" height="8" fill="#1050A0" stroke="#404040"/>
<rect x="1113.5" y="1008.5" width="9" height="8" fill="#1050A0" stroke="#404040"/>
<rect x="1113" y="1017" width="8" height="2" fill="#E0E0E0"/>
<path d="M1124 1010L1129 1019H1119Z" fill="#F0D000" stroke="#806000" stroke-width="0.6"/>
<rect x="1123.5" y="1013" width="1" height="3" fill="#000"/>
<!-- speaker -->
<path d="M1131 1009H1134L1138 1005V1020L1134 1016H1131Z" fill="#fff" stroke="#404040"/>
<path d="M1140 1010Q1142 1012.5 1140 1015M1143 1008Q1146 1012.5 1143 1017" fill="none" stroke="#3CA03C" stroke-width="1"/>
<!-- ATI -->
<rect x="1148" y="1006" width="16" height="12" fill="#F00000"/>
<path d="M1150 1016L1153 1008H1155L1158 1016M1151 1013H1156M1157 1009H1161M1159 1009V1016M1162.5 1009V1016" stroke="#fff" stroke-width="1.4" fill="none"/>
<!-- check -->
<circle cx="1175" cy="1009.5" r="4.8" fill="#40B040" stroke="#208020"/>
<path d="M1172.5 1009.5L1174.5 1011.5L1178 1007.5" stroke="#fff" stroke-width="1.4" fill="none"/>
<path d="M1167 1013L1171 1017L1168 1020M1176 1017L1180 1020M1172 1015L1176 1019" stroke="#A0A0A0" stroke-width="1.2" fill="none"/>
<!-- user -->
<circle cx="1190" cy="1008" r="3" fill="#8CB4E0" stroke="#4070B0" stroke-width="0.8"/>
<path d="M1185.5 1020V1015C1185.5 1012 1194.5 1012 1194.5 1015V1020Z" fill="#8CB4E0" stroke="#4070B0" stroke-width="0.8"/>
<rect x="1192.5" y="1013.5" width="7" height="7" rx="1.5" fill="#60D020" stroke="#308010"/>
<!-- green square waves -->
<rect x="1202.5" y="1005.5" width="15" height="15" fill="#00FF00" stroke="#000"/>
<path d="M1205 1009Q1213 1009 1215 1018M1205 1012Q1210 1012 1212 1018M1205 1015Q1208 1015 1209 1018" fill="none" stroke="#000" stroke-width="1.6"/>
</svg>
<!-- SciTE title icon -->
<svg class="a" style="left:3px;top:2px" width="16" height="16" viewBox="0 0 16 16">
<defs><radialGradient id="tg1" cx="0.45" cy="0.35" r="0.7"><stop offset="0" stop-color="#8FA8D8"/><stop offset="0.55" stop-color="#3A5A9A"/><stop offset="1" stop-color="#101C3C"/></radialGradient></defs>
<circle cx="8" cy="8" r="7.8" fill="url(#tg1)"/>
<path d="M8 4.2L12.3 10.6H3.7Z" fill="#1A2850" stroke="#fff" stroke-width="1.9" stroke-linejoin="round"/>
<circle cx="8" cy="9" r="1" fill="#000"/>
<path d="M3 12H13" stroke="#0A1020" stroke-width="0.8"/>
</svg>
<!-- SciTE title buttons glyphs -->
<svg class="a" style="left:1229px;top:3px" width="50" height="14" viewBox="0 0 50 14" shape-rendering="crispEdges">
<rect x="4" y="9" width="6" height="2" fill="#000"/>
<rect x="20" y="2" width="6" height="1" fill="#000"/><rect x="20" y="3" width="6" height="1" fill="#000"/><rect x="25" y="2" width="1" height="6" fill="#000"/>
<rect x="20" y="2" width="1" height="3" fill="#000"/>
<rect x="17" y="5" width="6" height="2" fill="#000"/><rect x="17" y="5" width="1" height="6" fill="#000"/><rect x="22" y="5" width="1" height="6" fill="#000"/><rect x="17" y="10" width="6" height="1" fill="#000"/>
</svg>
<svg class="a" style="left:1263px;top:3px" width="16" height="14" viewBox="0 0 16 14">
<path d="M3.8 3L11.2 10M11.2 3L3.8 10" stroke="#000" stroke-width="1.6"/>
</svg>

<div class="a ui" style="left:1227px;top:1006px;font-size:11px;letter-spacing:0.1px">7:41 PM</div>



<!-- ===== popup window ===== -->
<div class="a" style="left:1101px;top:473px;width:1px;height:276px;background:#FAFBFD"></div>
<div class="a" style="left:223px;top:473px;width:878px;height:277px;background:#D4D0C8"></div>
<div class="a" style="left:224px;top:474px;width:875px;height:1px;background:#fff"></div>
<div class="a" style="left:224px;top:474px;width:1px;height:274px;background:#fff"></div>
<div class="a" style="left:1099px;top:474px;width:1px;height:275px;background:#808080"></div>
<div class="a" style="left:224px;top:748px;width:876px;height:1px;background:#808080"></div>
<div class="a" style="left:1100px;top:473px;width:1px;height:277px;background:#404040"></div>
<div class="a" style="left:223px;top:749px;width:878px;height:1px;background:#404040"></div>
<div class="a" style="left:227px;top:477px;width:870px;height:18px;background:linear-gradient(to right,#808080,#C0C0C0)"></div>
<svg class="a" style="left:229px;top:478px" width="16" height="16" viewBox="0 0 16 16">
<defs><radialGradient id="pg1" cx="0.45" cy="0.35" r="0.65"><stop offset="0" stop-color="#9DB4E0"/><stop offset="0.5" stop-color="#3A5A9A"/><stop offset="1" stop-color="#0E1A38"/></radialGradient></defs>
<circle cx="8" cy="8" r="7.8" fill="url(#pg1)"/>
<path d="M8 4.2L12.3 10.6H3.7Z" fill="#1A2850" stroke="#fff" stroke-width="1.9" stroke-linejoin="round"/>
<circle cx="8" cy="9" r="1" fill="#000"/>
<path d="M3 12H13" stroke="#0A1020" stroke-width="0.8"/>
</svg>
<div class="a" style="left:247px;top:480px;color:#D4D0C8;font-weight:bold;font-size:11.5px;line-height:13px;white-space:pre">TMN Status Bar</div>
<div class="cbtn" style="left:1045px;top:479px"></div>
<div class="cbtn" style="left:1061px;top:479px"></div>
<div class="cbtn" style="left:1079px;top:479px"></div>
<svg class="a" style="left:1045px;top:479px" width="50" height="14" viewBox="0 0 50 14" shape-rendering="crispEdges">
<rect x="4" y="9" width="6" height="2" fill="#000"/>
<rect x="19" y="2" width="9" height="9" fill="#000"/><rect x="20" y="4" width="7" height="6" fill="#D4D0C8"/>
</svg>
<svg class="a" style="left:1079px;top:479px" width="16" height="14" viewBox="0 0 16 14">
<path d="M3.8 3L11.2 10M11.2 3L3.8 10" stroke="#000" stroke-width="1.6"/>
</svg>
<!-- client -->
<div class="a" style="left:227px;top:496px;width:870px;height:50px;background:#fff"></div>
<!-- reload button -->
<div class="a" style="left:227px;top:546px;width:40px;height:30px;background:#D4D0C8;border-top:1px solid #fff;border-left:1px solid #fff;border-right:1px solid #404040;border-bottom:1px solid #404040;box-shadow:inset -1px -1px 0 #808080"></div>
<div class="a ui" style="left:230px;top:554px;font-size:11.5px;letter-spacing:-0.3px">Reload</div>
<!-- IE2 -->
<div class="a" style="left:267px;top:546px;width:800px;height:200px;background:#333333;border-top:1px solid #808080;border-left:1px solid #808080;border-right:1px solid #fff;border-bottom:1px solid #fff;box-shadow:inset 1px 1px 0 #404040,inset -1px -1px 0 #D4D0C8"></div>
<!-- scrollbar -->
<div class="a" style="left:1049px;top:548px;width:16px;height:196px;background-color:#fff;background-image:linear-gradient(45deg,#D4D0C8 25%,transparent 25%,transparent 75%,#D4D0C8 75%),linear-gradient(45deg,#D4D0C8 25%,transparent 25%,transparent 75%,#D4D0C8 75%);background-size:2px 2px;background-position:0 0,1px 1px"></div>
<div class="sbtn" style="left:1049px;top:548px"></div>
<div class="sbtn" style="left:1049px;top:728px"></div>
<svg class="a" style="left:1049px;top:548px" width="16" height="196" viewBox="0 0 16 196" shape-rendering="crispEdges">
<path d="M8 6L12 10H4Z" fill="#808080"/><rect x="5" y="10" width="8" height="1" fill="#fff"/>
<path d="M4 186H12L8 190Z" fill="#808080"/>
</svg>
<!-- page content -->
<div class="a" style="left:269px;top:548px;width:780px;height:196px;overflow:hidden">
 <div class="a iet" style="left:93px;top:16px;color:#FFA800;font-weight:bold;transform:scaleX(1.2566)">Because you have not reached the rank of Gangster yet, you can use the rank bar for free.</div>
 <div class="a iet" style="left:103px;top:29px;color:#FFA800;font-weight:bold;transform:scaleX(1.2432)">When you reach Gangster, it will no longer be available unless you buy one with credits.</div>
 <div class="a" style="left:310px;top:61px;font-size:35px;line-height:40px;font-weight:bold;color:#fff;white-space:pre;transform-origin:0 0;transform:scaleX(1.072)">Rank bar</div>
 <div class="a iet" style="left:191px;top:118px;color:#fff;transform:scaleX(1.175)">On this page you will be able to see the progress of your TMN career.</div>
 <div class="a" style="left:244px;top:154px;width:200px;height:23px;background:#000"></div>
 <div class="a" style="left:246px;top:156px;width:94px;height:19px;background:#006600"></div>
 <div class="a" style="left:340px;top:156px;width:102px;height:19px;background:#fff"></div>
 <div class="a" style="left:441px;top:150px;font-size:25.5px;line-height:30px;font-weight:bold;color:#fff;white-space:pre;transform-origin:0 0;transform:scaleX(1.27)">47.6%</div>
</div>

</body></html>
